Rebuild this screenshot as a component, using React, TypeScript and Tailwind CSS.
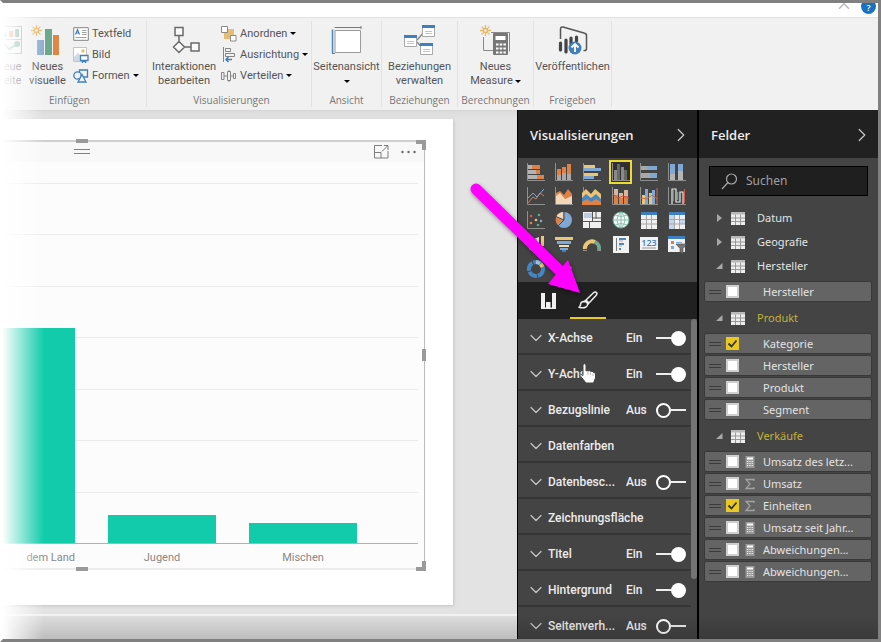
import type { ReactNode } from "react";
import { ChevronDown, ChevronRight, ChevronUp } from "lucide-react";

const TITLE_FONT = "font-['Open_Sans','Noto_Sans',sans-serif]";
const LABEL_FONT = "font-['Roboto','Open_Sans',sans-serif]";

/* ---------- Ribbon icons ---------- */

function Sparkle() {
  return (
    <g stroke="#e3b96a" strokeWidth="1.3">
      <path d="M5.5 0V11M0 5.500H11M1.600 1.600L9.400 9.400M9.400 1.600L1.600 9.400" />
      <circle cx="5.500" cy="5.500" r="2" fill="#f6f0e4" />
    </g>
  );
}

const PageIcon = (
  <svg width="19" height="31" viewBox="0 0 19 31" fill="none">
    <path d="M0 1.500H18.500V28.500H0M0 14.500H18.500" stroke="#a5a5a5" />
    <path d="M6 6h4v6h-4z" fill="#de8a4e" />
    <path d="M0 8h4v4H0zM12 4h4v8h-4z" fill="#74a98d" />
    <path d="M0 18L6 24L13 20" stroke="#74a98d" strokeWidth="2" />
    <circle cx="14" cy="19" r="3" fill="#74a98d" />
  </svg>
);

const NewVisualIcon = (
  <svg width="32" height="31" viewBox="0 0 32 31" fill="none">
    <Sparkle />
    <path d="M6 15h7v15H6z" fill="#8badd0" />
    <path d="M14 4h7v26h-7z" fill="#6ca98c" />
    <path d="M22 10h6v20h-6z" fill="#de8744" />
  </svg>
);

const InteractionsIcon = (
  <svg width="28" height="31" viewBox="0 0 28 31" fill="none" stroke="#6a6a6a" strokeWidth="1.500" className="ml-1">
    <path d="M3 2.500h8v8H3zM7 11v5M7 16.500l5.500 5.500-5.500 5.500L1.500 22zM12.500 22H19M19 18h8v8h-8z" fill="#fafafa" />
  </svg>
);

const PageViewIcon = (
  <svg width="32" height="31" viewBox="0 0 32 31" fill="none">
    <path d="M1.500 4.500V28" stroke="#4b86c0" strokeWidth="1.500" />
    <path d="M3.500 2.500H30M30 1v3M1 28.500h3" stroke="#7a7a7a" />
    <path d="M4 5.500h25.500v22H4z" fill="#fff" stroke="#9a9a9a" />
  </svg>
);

function MiniTable({ x, y }: { x: number; y: number }) {
  return (
    <g transform={`translate(${x} ${y})`}>
      <path d="M.5.5h12v11H.5z" fill="#fff" stroke="#a8a8a8" />
      <path d="M0 0h13v3H0z" fill="#3e7fbd" />
      <path d="M3 6.500h7M3 8.500h7" stroke="#c4c4c4" />
    </g>
  );
}

const RelationsIcon = (
  <svg width="32" height="31" viewBox="0 0 32 31" fill="none">
    <path d="M13 15L21 6M13 17l8 9" stroke="#8a8a8a" strokeWidth="1.500" />
    <MiniTable x={0} y={10} />
    <MiniTable x={18} y={0} />
    <MiniTable x={16} y={18} />
  </svg>
);

const MeasureIcon = (
  <svg width="32" height="31" viewBox="0 0 32 31" fill="none">
    <path d="M11 7.500h18.500v19M3.500 12v13.500H14" stroke="#8a8a8a" />
    <Sparkle />
    <rect x="13" y="8" width="15" height="22" rx="1" fill="#777" />
    <path d="M15.500 11h10v4h-10z" fill="#fff" />
    <path d="M16 19.500h10M16 23.500h10M16 27.500h10" stroke="#fff" strokeWidth="2" strokeDasharray="2.500 1.200" />
  </svg>
);

const PublishIcon = (
  <svg width="30" height="31" viewBox="0 0 30 31" fill="none">
    <path d="M2.500 14V4.500Q2.500 1.500 5 2l21 6q2.500.5 2.500 2.500V24q0 2-3 1.500" stroke="#555" strokeWidth="1.500" />
    <path d="M2.500 18v7M8 15v12M13 13v6M18.500 12v4" stroke="#444" strokeWidth="3.200" strokeLinecap="round" />
    <circle cx="17" cy="23" r="6.500" fill="#427eb8" />
    <path d="M17 27v-7M13.500 22.500L17 19l3.500 3.500" stroke="#fff" strokeWidth="1.800" />
  </svg>
);

const TextBoxIcon = (
  <svg width="16" height="14" viewBox="0 0 16 14" fill="none">
    <path d="M.7.700h14.600v12.600H.7z" fill="#fff" stroke="#858585" />
    <path d="M2.500 7.500L4.500 2.500l2 5M3.200 6h2.600" stroke="#3e7fbd" strokeWidth="1.200" />
    <path d="M9 3.500h4.500M9 5.500h4.500M9 7.500h4.500M2.500 10.500h11" stroke="#a0a0a0" />
  </svg>
);

const ImageIcon = (
  <svg width="16" height="16" viewBox="0 0 16 16" fill="none">
    <path d="M.5.5h13v14H.5z" fill="#fff" stroke="#c4c4c4" />
    <circle cx="10" cy="4" r="1.700" fill="#e8c069" />
    <path d="M1 10l4-4 4 4v4H1z" fill="#d3d8de" />
    <path d="M7.500 8.500h7.500v5H7.500zM9 16l2-2.500L13 16" fill="#fff" stroke="#3e7fbd" strokeWidth="1.300" />
  </svg>
);

const ShapesIcon = (
  <svg width="16" height="14" viewBox="0 0 16 14" fill="none" stroke="#3e7fbd" strokeWidth="1.300">
    <path d="M6.500 1h8v7h-8z" fill="#f1f1f1" />
    <circle cx="4.500" cy="6.500" r="3.700" fill="#f1f1f1" />
    <path d="M9 5.500L13 13H5z" fill="#f1f1f1" />
  </svg>
);

const ArrangeIcon = (
  <svg width="16" height="16" viewBox="0 0 16 16" fill="none">
    <path d="M3 3h10v10H3z" fill="#e6bd74" />
    <path d="M.5.5h6v6h-6zM9.500 9.500h5.500v5.500H9.500z" fill="#fff" stroke="#888" />
  </svg>
);

const AlignIcon = (
  <svg width="16" height="16" viewBox="0 0 16 16" fill="none">
    <path d="M2.500 0v15M4.500 1.500h5v3h-5zM4.500 6.500h9v3h-9z" stroke="#858585" />
    <path d="M11 12.500H5M7.500 10L5 12.500 7.500 15" stroke="#3e7fbd" strokeWidth="1.500" />
  </svg>
);

const DistributeIcon = (
  <svg width="16" height="12" viewBox="0 0 16 12" fill="none" stroke="#858585">
    <path d="M.5 2.500H3v7H.5V2.500M6.500 1.500h3v9h-3zM12.500 3.500h2v5h-2zM3 6h3.500M9.500 6h3M8 0v1.500M8 10.500V12" />
  </svg>
);

/* ---------- Ribbon parts ---------- */

function Caret() {
  return <span className="inline-block border-x-[3px] border-t-[3px] border-x-transparent border-t-black" />;
}

function BigButton({ icon, lines, caret, label }: { icon: ReactNode; lines: string[]; caret?: boolean; label?: string }) {
  return (
    <button type="button" aria-label={label} className="mt-[2px] flex flex-col items-center whitespace-nowrap text-[11px] leading-[14px]">
      <span className="mb-1 flex h-[31px] items-center">{icon}</span>
      {lines.map((line, i) => (
        <span key={line} className="flex items-center gap-[2px]">
          {line}
          {caret && lines.length > 1 && i === lines.length - 1 && <Caret />}
        </span>
      ))}
      {caret && lines.length === 1 && (
        <span className="flex h-[14px] items-center">
          <Caret />
        </span>
      )}
    </button>
  );
}

function SmallButton({ icon, label, caret }: { icon: ReactNode; label: string; caret?: boolean }) {
  return (
    <button type="button" className="flex h-[21px] items-center gap-[3px] whitespace-nowrap text-[11px] leading-[14px]">
      <span className="flex w-4 justify-center">{icon}</span>
      <span>{label}</span>
      {caret && <Caret />}
    </button>
  );
}

function Group({
  caption,
  width,
  align = "justify-center",
  children,
}: {
  caption: string;
  width: string;
  align?: string;
  children: ReactNode;
}) {
  return (
    <section aria-label={caption} className={`flex shrink-0 flex-col justify-between border-r border-[#e2e2e2] ${width}`}>
      <div className={`flex items-start gap-[5px] pt-[2px] ${align}`}>{children}</div>
      <div className={`${TITLE_FONT} text-center text-[10px] leading-[14px] text-[#777]`}>{caption}</div>
    </section>
  );
}

function Ribbon() {
  return (
    <div className={`${LABEL_FONT} flex h-[93px] shrink-0 border-t border-[#e2e2e2] bg-[#f1f1f1] py-[3px] text-[#555]`}>
      <Group caption="Einfügen" width="w-36 pr-[10px]" align="justify-start">
        <div className="flex w-[19px] shrink-0 justify-end">
          <BigButton icon={PageIcon} lines={["eue", "eite"]} label="Neue Seite" />
        </div>
        <div className="flex w-[41px] shrink-0 justify-center">
          <BigButton icon={NewVisualIcon} lines={["Neues", "visuelle"]} />
        </div>
        <div className="flex flex-col">
          <SmallButton icon={TextBoxIcon} label="Textfeld" />
          <SmallButton icon={ImageIcon} label="Bild" />
          <SmallButton icon={ShapesIcon} label="Formen" caret />
        </div>
      </Group>
      <Group caption="Visualisierungen" width="w-[165px] pl-[5px]" align="justify-start">
        <BigButton icon={InteractionsIcon} lines={["Interaktionen", "bearbeiten"]} />
        <div className="flex flex-col">
          <SmallButton icon={ArrangeIcon} label="Anordnen" caret />
          <SmallButton icon={AlignIcon} label="Ausrichtung" caret />
          <SmallButton icon={DistributeIcon} label="Verteilen" caret />
        </div>
      </Group>
      <Group caption="Ansicht" width="w-[70px]">
        <BigButton icon={PageViewIcon} lines={["Seitenansicht"]} caret />
      </Group>
      <Group caption="Beziehungen" width="w-[76px]">
        <BigButton icon={RelationsIcon} lines={["Beziehungen", "verwalten"]} />
      </Group>
      <Group caption="Berechnungen" width="w-[76px]">
        <BigButton icon={MeasureIcon} lines={["Neues", "Measure"]} caret />
      </Group>
      <Group caption="Freigeben" width="w-[78px]">
        <BigButton icon={PublishIcon} lines={["Veröffentlichen"]} />
      </Group>
    </div>
  );
}

/* ---------- Report canvas ---------- */

const bars = [
  { label: "dem Land", value: 59.7, cell: "flex-1", text: "text-right" },
  { label: "Jugend", value: 7.8, cell: "w-[108px]", text: "text-center" },
  { label: "Mischen", value: 5.5, cell: "w-[108px]", text: "text-center" },
];

function ReportVisual() {
  return (
    <div className="relative flex flex-1 flex-col border-y-2 border-r border-t-[#cfcfcf] border-r-[#bdbdbd] border-b-[#ececec] bg-[#fcfcfc]">
      <div className="flex h-5 items-center justify-end gap-3 bg-[#f8f8f8] pr-2">
        <button type="button" aria-label="Fokusmodus">
          <svg width="15" height="14" viewBox="0 0 15 14" fill="none" stroke="#7d7d7d" className="block">
            <path d="M8 .5H.5v12.500h13.500V6M.5 7.500H7V13M8 6.500L13.500 1M10 .5h4V5" />
          </svg>
        </button>
        <button type="button" aria-label="Weitere Optionen">
          <svg width="15" height="4" viewBox="0 0 15 4" fill="#666" className="block">
            <circle cx="1.500" cy="2" r="1.200" />
            <circle cx="7.500" cy="2" r="1.200" />
            <circle cx="13.500" cy="2" r="1.200" />
          </svg>
        </button>
      </div>
      <div className="relative mt-[21px] mr-[6px] flex flex-1 flex-col border-b border-[#b0b0b0]">
        {[0, 1, 2, 3, 4, 5, 6].map((n) => (
          <div key={n} className="flex-1 border-t border-[#ebebeb]" />
        ))}
        <div className="absolute inset-0 flex items-end gap-[33px] pr-[61px]">
          {bars.map((b) => (
            <div key={b.label} className={`${b.cell} bg-[#12cbaa]`} style={{ height: `${b.value}%` }} />
          ))}
        </div>
      </div>
      <div className={`${LABEL_FONT} mr-[6px] flex h-6 items-center gap-[33px] pt-1 pr-[61px] text-[11px] leading-[14px] text-[#888]`}>
        {bars.map((b) => (
          <div key={b.label} className={`${b.cell} ${b.text}`}>
            {b.label}
          </div>
        ))}
      </div>
      {/* resize and drag handles */}
      <span className="absolute -top-[3px] left-[73px] h-1 w-3 bg-[#9a9a9a]" />
      <span className="absolute top-[7px] left-[71px] h-[5px] w-4 border-y border-[#808080]" />
      <span className="absolute -bottom-[3px] left-[73px] h-1 w-3 bg-[#9a9a9a]" />
      <span className="absolute -top-[2px] -right-[2px] size-[10px] border-t-4 border-r-4 border-[#9a9a9a]" />
      <span className="absolute -right-[2px] -bottom-[3px] size-[10px] border-r-4 border-b-4 border-[#9a9a9a]" />
      <span className="absolute top-[207px] -right-[2px] h-3 w-1 bg-[#9a9a9a]" />
    </div>
  );
}

function Canvas() {
  return (
    <main className="flex min-w-0 flex-1 flex-col bg-[#e3e3e3]">
      <div className="h-[9px] shrink-0 border-t border-[#d6d6d6] bg-gradient-to-b from-[#dcdcdc] to-[#e3e3e3]" />
      <div className="mr-16 flex flex-1 bg-white pt-[21px] pr-7 pb-[35px] shadow-[1px_1px_3px_#c4c4c4]">
        <ReportVisual />
      </div>
      <div className="mt-[9px] h-[25px] shrink-0 border-t-2 border-[#f2f2f2] bg-[#dedede]" />
    </main>
  );
}

/* ---------- Visualizations pane ---------- */

const O = "#dd8247";
const B = "#7fa9d4";
const Y = "#eac679";
const G = "#8f8f8f";
const axes = <path d="M1.500 0V17.500H19" stroke={G} fill="none" />;

const visuals: { name: string; art: ReactNode }[] = [
  { name: "Gestapeltes Balkendiagramm", art: <>{axes}<path d="M2 2h4v4H2zM2 7h8v4H2zM2 12h9v4H2z" fill="#b4b4b4" /><path d="M6 2h8v4H6zM10 7h4v4h-4zM11 12h7v4h-7z" fill={O} /></> },
  { name: "Gestapeltes Säulendiagramm", art: <>{axes}<path d="M3 6h4v6H3zM8 4h4v6H8zM13 1h4v10h-4z" fill={O} /><path d="M3 12h4v5H3zM8 10h4v7H8zM13 11h4v6h-4z" fill="#a9a9a9" /></> },
  { name: "Gruppiertes Balkendiagramm", art: <>{axes}<path d="M2 2h11v3H2zM2 10h14v3H2z" fill={Y} /><path d="M2 5h17v3H2zM2 13h10v3H2z" fill={B} /></> },
  { name: "Gruppiertes Säulendiagramm", art: <>{axes}<path d="M3 7h3v10H3zM10 4h3v13h-3z" fill="#8a8a8a" /><path d="M6 1h3v16H6zM13 7h3v10h-3z" fill="#686868" /></> },
  { name: "Gestapeltes Balkendiagramm (100 %)", art: <>{axes}<path d="M2 3h6v4H2zM2 10h9v5H2z" fill="#a9a9a9" /><path d="M8 3h10v4H8zM11 10h7v5h-7z" fill={B} /></> },
  { name: "Gestapeltes Säulendiagramm (100 %)", art: <>{axes}<path d="M3 1h5v10H3zM11 1h5v7h-5z" fill={B} /><path d="M3 11h5v6H3zM11 8h5v9h-5z" fill="#b5b5b5" /></> },
  { name: "Liniendiagramm", art: <g fill="none">{axes}<path d="M2 11l5-5 4 4 7-8" stroke={B} /><path d="M2 16l5-6 3 2 4-6 4 3" stroke="#c98265" /></g> },
  { name: "Flächendiagramm", art: <>{axes}<path d="M2 6l4-2 4 4 4-6 4 5v10H2z" fill={O} /><path d="M2 9l4-3 5 6 7-3v8H2z" fill="#f4d6b8" /></> },
  { name: "Gestapeltes Flächendiagramm", art: <>{axes}<path d="M0 6l4-4 5 5 4-5 6 5v10H0z" fill={Y} /><path d="M0 11l4-4 5 4 5-4 5 5v6H0z" fill="#4788c2" /><path d="M0 15l5-3 4 3 5-3 5 3v3H0z" fill={O} /></> },
  { name: "Linien- und gestapeltes Säulendiagramm", art: <>{axes}<path d="M3 2h4v15H3zM8 6h4v11H8zM13 3h4v14h-4z" fill="#d9b6a0" /><path d="M3 8h4v9H3zM8 11h4v6H8zM13 9h4v8h-4z" fill={O} /><path d="M2 7l5 4 5-2 6 2" stroke="#d64e39" fill="none" /></> },
  { name: "Linien- und gruppiertes Säulendiagramm", art: <>{axes}<path d="M3 8h3v9H3zM10 6h3v11h-3z" fill={Y} /><path d="M6 2h3v15H6zM13 3h3v14h-3z" fill={B} /><path d="M2 11l6 1 5-4 5 4M18 1v16" stroke="#c96a43" fill="none" /></> },
  { name: "Menübanddiagramm", art: <>{axes}<path d="M5 17V2h4v13h4V5h3v12" stroke="#e8e8e8" strokeWidth="1.200" fill="none" /><path d="M6.500 3v11M17.500 2v14" stroke="#d45a4c" fill="none" /><path d="M10.500 5v8" stroke="#58aa87" strokeWidth="1.500" /></> },
  { name: "Punktdiagramm", art: <>{axes}<circle cx="5" cy="5" r="1.300" fill="#d45a4c" /><circle cx="13" cy="4" r="1.300" fill="#58aa87" /><circle cx="10" cy="9" r="1.300" fill={Y} /><circle cx="5" cy="12" r="1.300" fill={O} /><circle cx="15" cy="10" r="1.300" fill={B} /><circle cx="12" cy="14" r="1.300" fill="#58aa87" /></> },
  { name: "Kreisdiagramm", art: <><circle cx="10" cy="9" r="8" fill={B} /><path d="M9 9V1A8 8 0 0 0 2 6z" fill="#f4d6b8" /><path d="M9 9L2 6a8 8 0 0 0 2 8z" fill={O} /><path d="M10 9l-8-3.500M10 9L4 15M10 9V1" stroke="#444" fill="none" /></> },
  { name: "Treemap", art: <><path d="M1 1h18v16H1z" fill="#efefef" /><path d="M2 2h8v5H2z" fill="#b8cde3" /><path d="M1 10.500h18M10.500 1v9.500M7.500 10.500V17M14 1v6h5M10.500 7h4" stroke="#555" fill="none" /></> },
  { name: "Karte", art: <><circle cx="10" cy="9" r="8" fill="#f3f8f4" stroke="#64a58d" /><path d="M10 1v16M2 9h16M4 4q6 3 12 0M4 14q6-3 12 0M10 1q-8 8 0 16M10 1q8 8 0 16" stroke="#8fbfb4" fill="none" /></> },
  { name: "Tabelle", art: <><path d="M2 1h16v17H2z" fill="#f0f0f0" /><path d="M2 1h16v3H2z" fill="#3e7fbd" /><path d="M2 8.500h16M2 13h16M7.500 4v14M12.500 4v14" stroke="#a8a8a8" fill="none" /></> },
  { name: "Matrix", art: <><path d="M2 1h16v17H2z" fill="#f0f0f0" /><path d="M2 1h16v3H2z" fill="#3e7fbd" /><path d="M2 4h5v14H2zM12 9h6v4h-6z" fill="#c2d5ea" /><path d="M2 8.500h16M2 13h16M7.500 4v14M12.500 4v14" stroke="#a8a8a8" fill="none" /></> },
  { name: "Flächenkartogramm", art: <><path d="M3 2l5 2 5-2v12l-5 3-5-3z" fill="#e9e1ce" /><path d="M15 1h3v10h-3zM15 13h3v3h-3z" fill={Y} /><path d="M6 3v12M10 4v12" stroke="#777" /></> },
  { name: "Trichter", art: <><path d="M1 2h18v3H1z" fill={Y} /><path d="M3 6h14v3H3zM6 13h8v2H6z" fill={B} /><path d="M5 10h10v2H5z" fill="#f1dfbb" /><path d="M8 15h4v2H8z" fill="#3e7fbd" /></> },
  { name: "Messgerät", art: <g fill="none" strokeWidth="4"><path d="M3 14a7 7 0 0 1 10-7" stroke={Y} /><path d="M13 7a7 7 0 0 1 4 8" stroke="#70aa8d" /><path d="M1 15.500h4M15 15.500h4" stroke={G} strokeWidth="1" /></g> },
  { name: "Mehrzeilige Karte", art: <><path d="M2 1h16v17H2z" fill="#f2f2f2" /><path d="M5.500 3v13" stroke="#777" /><path d="M8 3h7v2H8zM8 8h5v2H8zM8 13h2v2H8z" fill="#4b86c0" /><path d="M8 6h4M8 11h3" stroke="#aaa" /></> },
  { name: "Karte mit Zahl", art: <><path d="M1 2h18v13H1z" fill="#f2f2f2" /><text x="10" y="11" textAnchor="middle" fontFamily="Open Sans, sans-serif" fontSize="9" fontWeight="600" fill="#3e7fbd">123</text><path d="M3 13h14" stroke="#999" /></> },
  { name: "Datenschnitt", art: <><path d="M1 1h17v16H1z" fill="#f2f2f2" /><path d="M1 1h17v3H1z" fill="#3e7fbd" /><path d="M4 6h3v3H4z" fill={O} /><path d="M4 11h3v3H4zM9 7h6v1H9z" fill={B} /><path d="M9 9h11l-4 4.500V19l-3-2v-3.500z" fill="#777" stroke="#444" strokeWidth=".6" /></> },
  { name: "Ringdiagramm", art: <g fill="none" strokeWidth="4"><circle cx="10" cy="10" r="7" stroke="#4586c2" strokeDasharray="9 1" /><path d="M10 3a7 7 0 0 1 4 1.500" stroke="#a5c3e2" /><path d="M14.500 5a7 7 0 0 1 2 3" stroke={Y} /></g> },
  { name: "Weitere Visuals", art: <g fill="#ededed"><circle cx="4" cy="9" r="1.500" /><circle cx="10" cy="9" r="1.500" /><circle cx="16" cy="9" r="1.500" /></g> },
];

const formatRows: { label: string; on?: boolean }[] = [
  { label: "X-Achse", on: true },
  { label: "Y-Achse", on: true },
  { label: "Bezugslinie", on: false },
  { label: "Datenfarben" },
  { label: "Datenbesc...", on: false },
  { label: "Zeichnungsfläche" },
  { label: "Titel", on: true },
  { label: "Hintergrund", on: true },
  { label: "Seitenverh...", on: false },
];

function Toggle({ label, on }: { label: string; on: boolean }) {
  return (
    <label className="relative flex cursor-pointer items-center">
      <span className="w-[30px]">{on ? "Ein" : "Aus"}</span>
      <input type="checkbox" role="switch" aria-label={label} defaultChecked={on} className="peer sr-only" />
      {on ? (
        <span className="flex items-center">
          <span className="h-[2px] w-[15px] bg-[#ededed]" />
          <span className="size-[15px] rounded-full bg-white" />
        </span>
      ) : (
        <span className="flex items-center">
          <span className="size-[15px] rounded-full border-2 border-white" />
          <span className="h-[2px] w-[15px] bg-[#ededed]" />
        </span>
      )}
    </label>
  );
}

function PaneHeader({ title }: { title: string }) {
  return (
    <header className="flex h-12 shrink-0 items-center justify-between bg-[#212121] pt-[2px] pr-[5px] pl-3">
      <h2 className={`${TITLE_FONT} text-[13px] leading-[18px] font-semibold text-[#ededed]`}>{title}</h2>
      <button type="button" aria-label={`${title} einklappen`}>
        <ChevronRight size={22} strokeWidth={1.3} color="#c8c8c8" />
      </button>
    </header>
  );
}

function VisualizationsPane() {
  return (
    <aside className={`${LABEL_FONT} flex w-[181px] shrink-0 flex-col border-x border-black bg-[#444]`}>
      <PaneHeader title="Visualisierungen" />
      <div className="grid h-[124px] shrink-0 grid-cols-6 content-start pt-[2px] pr-[6px] pl-1">
        {visuals.map((v, i) => (
          <button
            key={v.name}
            type="button"
            aria-label={v.name}
            className={`flex h-6 items-center justify-center ${i === 3 ? "mx-[3px] bg-[#303030] outline-2 -outline-offset-2 outline-[#eedb32]" : ""}`}
          >
            <svg width="20" height="19" viewBox="0 0 20 19" className="shrink-0">
              {v.art}
            </svg>
          </button>
        ))}
      </div>
      <div className="flex h-[37px] shrink-0 bg-[#212121] pl-3" role="tablist">
        <button type="button" role="tab" aria-label="Felder" className="flex w-9 items-center justify-center">
          <svg width="15" height="16" viewBox="0 0 15 16" fill="#f0f0f0">
            <path d="M0 0h4v16H0zM5 9h4.500v7H5zM11 0h4v16h-4zM0 14.500h15V16H0z" />
          </svg>
        </button>
        <button
          type="button"
          role="tab"
          aria-label="Format"
          aria-selected="true"
          className="ml-1 flex w-9 items-center justify-center border-b-2 border-[#ecc91f]"
        >
          <svg width="20" height="18" viewBox="0 0 20 18" fill="none" stroke="#eee" strokeWidth="1.500" strokeLinejoin="round">
            <path d="M8 9L15.500 1.700Q17.500.3 18.500 1.500 19.500 2.800 18 4.500L11 12" />
            <path d="M8 9L11 12M6 10.500Q2.500 10.500 2.500 14 2 15.800 1 16.200 5 17.500 8 16 10 14.500 9.500 12.500L8.500 11z" />
            <path d="M8 9L6 10.500M11 12l-1.500 1.500" />
          </svg>
        </button>
      </div>
      <div className="flex min-h-0 flex-1">
        <div className="min-w-0 flex-1 overflow-hidden">
          {formatRows.map((row) => (
            <div
              key={row.label}
              className="flex h-9 items-center border-b-2 border-[#353535] pt-1 pr-[5px] pl-2 text-[12px] leading-4 font-medium text-[#ececec]"
            >
              <button type="button" className="flex flex-1 items-center gap-[2px] text-left whitespace-nowrap">
                <ChevronDown size={20} strokeWidth={1.5} color="#c4c4c4" />
                {row.label}
              </button>
              {row.on !== undefined && <Toggle label={row.label} on={row.on} />}
            </div>
          ))}
        </div>
        <div className="w-[6px] shrink-0">
          <div className="h-[260px] rounded-sm bg-[#737373]" />
        </div>
      </div>
    </aside>
  );
}

/* ---------- Fields pane ---------- */

type Field = { label: string; checked?: boolean; kind?: "calc" | "sum" };

const tables: { name: string; open?: boolean; used?: boolean; fields: Field[] }[] = [
  { name: "Datum", fields: [] },
  { name: "Geografie", fields: [] },
  { name: "Hersteller", open: true, fields: [{ label: "Hersteller" }] },
  {
    name: "Produkt",
    open: true,
    used: true,
    fields: [{ label: "Kategorie", checked: true }, { label: "Hersteller" }, { label: "Produkt" }, { label: "Segment" }],
  },
  {
    name: "Verkäufe",
    open: true,
    used: true,
    fields: [
      { label: "Umsatz des letz...", kind: "calc" },
      { label: "Umsatz", kind: "sum" },
      { label: "Einheiten", kind: "sum", checked: true },
      { label: "Umsatz seit Jahr...", kind: "calc" },
      { label: "Abweichungen...", kind: "calc" },
      { label: "Abweichungen...", kind: "calc" },
    ],
  },
];

function KindIcon({ kind }: { kind?: "calc" | "sum" }) {
  return (
    <svg width="10" height="12" viewBox="0 0 10 12" fill="none" className="shrink-0">
      {kind === "calc" && (
        <>
          <path d="M.5 0h9v12h-9z" fill="#9a9a9a" />
          <path d="M2 1.500h6v2H2z" fill="#fff" />
          <path d="M2 5.500h6M2 7.500h6M2 9.500h6" stroke="#e6e6e6" strokeDasharray="1.300 1" />
        </>
      )}
      {kind === "sum" && <path d="M9 3V1.500H1L5 6 1 10.500h8V9" stroke="#a2a2a2" strokeWidth="1.300" />}
    </svg>
  );
}

function FieldRow({ field }: { field: Field }) {
  return (
    <label className="mb-px flex h-[21px] cursor-pointer items-center rounded-xs border border-[#383838] bg-[#646464] pl-1">
      <span className="h-1 w-3 border-y border-[#3c3c3c]" />
      <span className="relative ml-[5px] flex size-[13px]">
        <input
          type="checkbox"
          defaultChecked={field.checked}
          className="size-[13px] appearance-none border-2 border-[#cfcfcf] bg-white checked:border-[#e9c81f] checked:bg-[#e9c81f]"
        />
        {field.checked && (
          <svg width="13" height="13" viewBox="0 0 13 13" fill="none" className="pointer-events-none absolute inset-0">
            <path d="M2.500 6.500L5.500 9.500 10.500 3.500" stroke="#333" strokeWidth="1.800" />
          </svg>
        )}
      </span>
      <span className="mr-2 ml-[6px]">
        <KindIcon kind={field.kind} />
      </span>
      <span className="whitespace-nowrap text-[#e3e3e3]">{field.label}</span>
    </label>
  );
}

function FieldsPane() {
  return (
    <aside className="flex w-[180px] shrink-0 flex-col border-l border-black bg-[#444] font-['Noto_Sans','Open_Sans',sans-serif] text-[11px] leading-4">
      <PaneHeader title="Felder" />
      <div className="mx-[10px] mt-2 mb-[10px] flex h-[30px] shrink-0 items-center gap-2 border border-black bg-[#1f1f1f] pl-[11px]">
        <svg width="17" height="17" viewBox="0 0 17 17" fill="none" stroke="#a8a8a8" strokeWidth="1.200" className="shrink-0">
          <circle cx="10.500" cy="6" r="5" />
          <path d="M7 9.500L1 16" />
        </svg>
        <input
          type="text"
          aria-label="Suchen"
          placeholder="Suchen"
          className="w-full min-w-0 bg-transparent text-[12px] text-[#aaa] outline-none placeholder:text-[#a0a0a0]"
        />
      </div>
      {tables.map((t) => (
        <div key={t.name}>
          <button type="button" className="flex h-6 w-full items-center pl-[17px]">
            <svg width="8" height="10" viewBox="0 0 8 10" fill="#a8a8a8">
              {t.open ? <path d="M6.500 2v6H0z" /> : <path d="M1 1l5 4-5 4z" />}
            </svg>
            <svg width="14" height="13" viewBox="0 0 14 13" className="ml-[7px]">
              <path d="M0 0h14v13H0z" fill="#ededed" />
              <path d="M0 0h14v2.500H0z" fill="#b8b8b8" />
              <path d="M0 6h14M0 9.500h14M4.500 2.500V13M9.500 2.500V13" stroke="#999" fill="none" />
            </svg>
            <span className={`ml-3 ${t.used ? "text-[#c2b13d]" : "text-[#e3e3e3]"}`}>{t.name}</span>
          </button>
          {t.open && (
            <div className="mr-[6px] ml-[5px] py-[3px]">
              {t.fields.map((f, i) => (
                <FieldRow key={i} field={f} />
              ))}
            </div>
          )}
        </div>
      ))}
    </aside>
  );
}

/* ---------- Page ---------- */

export default function App() {
  return (
    <div className="relative flex h-screen flex-col overflow-hidden border-y-[3px] border-r-[3px] border-l-[3px] border-y-[#808080] border-r-[#808080] border-l-white bg-white">
      <div className="flex h-[14px] shrink-0 items-start justify-end gap-2 overflow-hidden pr-[2px]">
        <button type="button" aria-label="Menüband minimieren">
          <ChevronUp size={18} strokeWidth={2} color="#b8b8b8" className="-mt-[6px]" />
        </button>
        <button
          type="button"
          aria-label="Hilfe"
          className={`${TITLE_FONT} -mt-1 flex size-[15px] items-end justify-center rounded-full bg-[#1673c4] pb-px text-[9px] leading-[10px] font-semibold text-white`}
        >
          ?
        </button>
      </div>
      <Ribbon />
      <div className="flex min-h-0 flex-1">
        <Canvas />
        <VisualizationsPane />
        <FieldsPane />
      </div>

      {/* soft edges of the window */}
      <div className="pointer-events-none absolute inset-x-0 bottom-0 h-6 bg-gradient-to-b from-transparent to-black/15" />
      <div className="pointer-events-none absolute -inset-y-[3px] -left-[3px] w-[44px] bg-gradient-to-r from-white from-5% to-transparent" />

      {/* callout arrow and pointer */}
      <svg
        width="120"
        height="120"
        viewBox="0 0 120 120"
        className="pointer-events-none absolute top-[178px] right-[296px] drop-shadow-[1px_2px_2px_rgba(0,0,0,0.45)]"
      >
        <path d="M14 8L97 89" stroke="#f0f" strokeWidth="11" strokeLinecap="round" />
        <path d="M118 112L86 103 106 79z" fill="#f0f" />
      </svg>
      <svg width="18" height="22" viewBox="0 0 18 22" className="pointer-events-none absolute top-[360px] right-[281px]">
        <path
          d="M4 1.500Q5.500-.2 7 1.500V8q1-1 2 0 1.500-1 2.500.5 2-1 2.500.7 2-.2 2.500 1.800V15l-2 5H7L1 12.500q.5-2 3 0z"
          fill="#fff"
          stroke="#444"
        />
        <path d="M9 9v3M11.500 9.500V12M14 10.500V13" stroke="#bbb" />
      </svg>
    </div>
  );
}
